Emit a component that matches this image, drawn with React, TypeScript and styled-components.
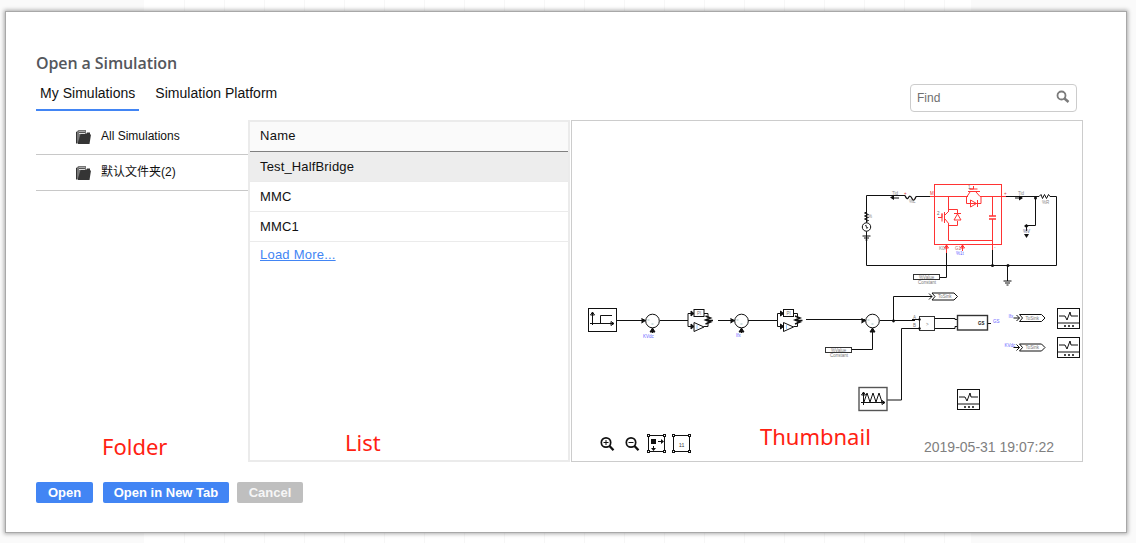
import React from "react";
import styled, { createGlobalStyle } from "styled-components";

const GlobalStyle = createGlobalStyle`
  * { box-sizing: border-box; }
  body { margin: 0; overflow: hidden; }
`;

const Backdrop = styled.div`
  width: 1136px;
  height: 543px;
  padding: 11px 9px 10px 5px;
  overflow: hidden;
  font-family: "Liberation Sans", Arial, sans-serif;
  background:
    linear-gradient(90deg, #fafafa 0 144px, transparent 144px 971px, #fafafa 971px),
    repeating-linear-gradient(90deg, transparent 0 39px, #f7f7f7 39px 40px) 145px 0,
    #fff;
`;

const Dialog = styled.main`
  height: 522px;
  width: 1122px;
  border: 1px solid #a8a8a8;
  background: #fff;
  box-shadow: 0 0 4px 1px rgba(0, 0, 0, 0.32);
  padding: 39px 43px 0 30px;
  display: flex;
  flex-direction: column;
`;

const Title = styled.h1`
  margin: 0;
  height: 25px;
  line-height: 25px;
  font: 600 16px/25px "Open Sans", sans-serif;
  letter-spacing: -0.1px;
  color: #54575c;
`;

const Toolbar = styled.div`
  height: 36px;
  display: flex;
  justify-content: space-between;
  padding-right: 6px;
`;

const Tabs = styled.nav`
  display: flex;
  gap: 12px;
`;

const Tab = styled.a<{ $active?: boolean }>`
  height: 35px;
  padding: 9px 4px 0;
  font-size: 14px;
  line-height: 17px;
  letter-spacing: 0.03px;
  white-space: nowrap;
  color: #111;
  border-bottom: 2px solid ${(p) => (p.$active ? "#4285f4" : "transparent")};
`;

const Search = styled.div`
  width: 167px;
  height: 28px;
  margin-top: 8px;
  border: 1px solid #ccc;
  border-radius: 4px;
  padding: 0 6px;
  display: flex;
  justify-content: space-between;
  font-size: 12px;
  line-height: 26px;
  color: #707070;

  svg { margin-top: 4px; }
`;

const Panels = styled.div`
  display: flex;
  height: 342px;
  margin-top: 8px;
`;

const Column = styled.section`
  width: 212px;
  position: relative;
`;

const FolderRow = styled.div<{ $first?: boolean }>`
  height: ${(p) => (p.$first ? 35 : 36)}px;
  border-bottom: 1px solid #c8c8c8;
  padding: ${(p) => (p.$first ? 8 : 9)}px 0 0 39px;
  display: flex;
  gap: 9px;
  font: 12px/17px "Liberation Sans", "Noto Sans CJK SC", sans-serif;
  color: #111;

  svg { margin-top: 1px; }
`;

const List = styled(Column)`
  width: 322px;
  border: 2px solid #ebebeb;
  font-size: 13px;
  color: #111;
`;

const ListHeader = styled.div`
  height: 30px;
  padding-left: 10px;
  line-height: 28px;
  letter-spacing: 0.3px;
  background: #fafafa;
  border-bottom: 1px solid #808080;
`;

const ListRow = styled.div<{ $selected?: boolean }>`
  height: 30px;
  padding-left: 10px;
  line-height: 30px;
  letter-spacing: 0.15px;
  background: ${(p) => (p.$selected ? "#ededed" : "#fff")};
  border-bottom: 1px solid #ebebeb;
`;

const MoreLink = styled.a`
  display: block;
  padding-left: 10px;
  line-height: 26px;
  letter-spacing: 0.22px;
  color: #4285f4;
  text-decoration: underline;
`;

const Preview = styled(Column)`
  width: 512px;
  margin-left: 1px;
  border: 1px solid #ccc;
`;

const Diagram = styled.svg`
  display: block;
  width: 510px;
  height: 309px;
`;

const PreviewFooter = styled.div`
  height: 31px;
  display: flex;
  justify-content: space-between;
  padding: 3px 28px 0 26px;
  font-size: 14px;
  line-height: 29px;
  color: #808080;
`;

const Note = styled.span<{ $x: number; $y: number }>`
  position: absolute;
  left: ${(p) => p.$x}px;
  top: ${(p) => p.$y}px;
  font: 22px/30px "Noto Sans", sans-serif;
  color: #ff2112;
`;

const Actions = styled.footer`
  display: flex;
  margin-top: 20px;
`;

const Button = styled.button<{ $width: number; $gap?: number; $muted?: boolean }>`
  width: ${(p) => p.$width}px;
  height: 21px;
  margin: 0 0 0 ${(p) => p.$gap ?? 0}px;
  padding: 0;
  border: 0;
  border-radius: 2px;
  background: ${(p) => (p.$muted ? "#bfbfbf" : "#4285f4")};
  color: ${(p) => (p.$muted ? "#f6f6f6" : "#fff")};
  font: bold 13px/21px "Liberation Sans", Arial, sans-serif;
  white-space: nowrap;
`;

const FolderIcon = () => (
  <svg width="17" height="17" viewBox="0 0 17 17">
    <path d="M1 3 3.5 1H11V5H6L4 14H1Z" fill="#777" />
    <path d="M4 2.5H10V5H4Z" fill="#ddd" />
    <path d="M4 3.5H10" stroke="#555" />
    <path d="M1.5 3V14.5" stroke="#333" />
    <path d="M5.5 5H11L12 3.5H15V5.5H16L14.5 15H2.5Z" fill="#353535" />
  </svg>
);

const SearchIcon = () => (
  <svg width="14" height="16" viewBox="0 0 14 16" fill="none" stroke="#7b7b7b">
    <circle cx="5.5" cy="6.5" r="4" strokeWidth="1.8" />
    <path d="M8.5 9.5 12.5 13" strokeWidth="2.5" />
  </svg>
);

const ZoomIcon = ({ x, plus }: { x: number; plus?: boolean }) => (
  <g transform={`translate(${x} 0)`} fill="none" stroke="#111">
    <circle cx="8" cy="9.5" r="4.7" strokeWidth="1.7" />
    <path d="M11.5 13 15.5 17.2" strokeWidth="2.3" />
    <path d={plus ? "M5.5 9.5H10.5M8 7V12" : "M5.5 9.5H10.5"} />
  </g>
);

const FrameIcon = ({ x }: { x: number }) => (
  <g transform={`translate(${x} 0)`} stroke="#111" fill="#fff">
    <rect x="1.5" y="2.5" width="16" height="16" />
    {[[0.5, 1.5], [16.5, 1.5], [0.5, 17.5], [16.5, 17.5]].map(([a, b]) => (
      <rect key={`${a}-${b}`} x={a} y={b} width="2" height="2" />
    ))}
  </g>
);

const ViewTools = () => (
  <svg width="96" height="24" viewBox="0 0 96 24" fontFamily="DejaVu Sans Mono, monospace">
    <ZoomIcon x={0} plus />
    <ZoomIcon x={25} />
    <FrameIcon x={49} />
    <path d="M53 6h5v5h-5ZM60 8h3V6l3 2.5-3 2.5V9h-3ZM55 13h1v2h2l-2.5 3-2.5-3h2Z" fill="#111" />
    <FrameIcon x={74} />
    <text x="83.5" y="14" textAnchor="middle" fontSize="9" fontWeight="bold" letterSpacing="-.5" fill="#222">1:1</text>
  </svg>
);

const Sum = ({ x, y = 321, end }: { x: number; y?: number; end: number }) => (
  <g>
    <circle cx={x} cy={y} r="6.8" fill="#fff" />
    <path d={`M${x} ${y + 7}V${end}`} />
    <path d={`M${x - 2.5} ${y + 11}L${x} ${y + 7}L${x + 2.5} ${y + 11}ZM${x - 11} ${y - 2.5}L${x - 7} ${y - 0.5}L${x - 11} ${y + 2}`} fill="#111" />
    <path d={`M${x - 5} ${y - 1}h2M${x - 1} ${y + 3}h2`} stroke="#7aa" strokeWidth=".7" />
  </g>
);

const Controller = ({ x }: { x: number }) => (
  <g transform={`translate(${x} 0)`}>
    <path d="M0 320.5H5V313.5H10M5 320.5V326.5H10" />
    <path d="M8 311 11 313.5 8 316ZM8 324 11 326.5 8 329Z" fill="#111" />
    <rect x="11" y="309.5" width="10" height="7" fill="#fff" />
    <path d="M11 322.5V331.5L21 327Z" fill="#fff" />
    <path d="M21 313.5H25V318M21 326.5H25V322" />
    <path d="m22.5 316 5 2-5 2 5 2-5 2M25 320.5h5" strokeWidth="1.5" />
    <text x="14" y="315" fill="#777">PI</text>
    <path d="M14 325v4" stroke="#9cf" />
  </g>
);

const Scope = ({ x, y }: { x: number; y: number }) => (
  <g transform={`translate(${x} ${y})`}>
    <rect x=".5" y=".5" width="22" height="20" fill="#fff" />
    <path d="M1 15H22M2 8H8L10 12 13 4 14 8H21" />
    <path d="M7 18h2m2 0h2m2 0h2" strokeWidth="1.3" />
  </g>
);

const Link = ({ x, y }: { x: number; y: number }) => (
  <g transform={`translate(${x} ${y})`}>
    <path d="M-6 0H0M-3 -3L0 0L-3 3" />
    <path d="M0 -3.5H22L25.5 0L22 3.5H0L3 0Z" fill="#fff" />
    <text x="6" y="1.6" fill="#777">ToSink</text>
  </g>
);

const Constant = ({ x, y }: { x: number; y: number }) => (
  <g transform={`translate(${x} ${y})`}>
    <rect x=".5" y=".5" width="26" height="5" fill="#fff" stroke="#333" />
    <text x="6" y="4.6" fill="#777">%Value</text>
    <text x="5" y="9.5" fill="#777">Constant</text>
  </g>
);

const Ground = ({ x, y }: { x: number; y: number }) => (
  <path d={`M${x - 4} ${y}h8m-6.5 2h5m-3.5 2h2`} />
);

const Circuit = () => (
  <Diagram viewBox="572 121 510 309" fill="none" stroke="#111" strokeWidth="1">
    <style>{"text{stroke:none;font:4.5px 'Liberation Sans',sans-serif}"}</style>

    <path d="M866.5 226V195.5H905M916 196.5H934M866.5 226V265.5H1056.5V196.5H1050M1001 196.5H1039M992.5 245V265M1007.5 265V281M1035.5 197V225.5H1026.5V231M946.5 253V277.5H940" />
    <path d="m866.5 212-2 1 4 1.5-4 1.5 4 1.5-4 1.5 4 1.5-2 1" />
    <circle cx="866.5" cy="227" r="4.2" fill="#fff" />
    <path d="M865 226q1.5-2 1.5 1t1.5 0" strokeWidth=".8" />
    <Ground x={866.5} y={236} />
    <Ground x={1007.5} y={281} />
    <path d="M905 195.5q2 5 3.5 2t3.5 1 4-2" strokeWidth="1.3" />
    <path d="m890 197.5 4-2.5v5ZM1023 198l-4-2.5v5Z" fill="#111" stroke="none" />
    <path d="M892 198h7M1015 198h7" />
    <path d="m1039 196.5 2-2 1.5 4 2-4 2 4 2-4 1.5 2" />
    <path d="m1024 226 2.5-2 2 2-2 2ZM1024 234h5l-2.5 4Z" fill="#111" stroke="none" />
    <g fill="#111" stroke="none">
      <circle cx="992.5" cy="265.5" r="1.5" />
      <circle cx="1008" cy="265.5" r="1.5" />
      <circle cx="1035.5" cy="198" r="1.5" />
    </g>
    <g fill="#888">
      <text x="892" y="194.5">Tid</text><text x="909" y="202.5">%L</text>
      <text x="930" y="194.5" fill="#d33">M</text><text x="868" y="218">%</text>
      <text x="1018" y="194.5">Tid</text><text x="1042" y="203.5">%R</text>
      <text x="1023" y="233" fill="#568">%V</text>
      <text x="904" y="195" fill="#d33">+</text><text x="1004" y="195" fill="#d33">+</text>
      <text x="939" y="249.5">K0i</text><text x="955" y="249.5" fill="#b66">G1</text>
      <text x="956" y="254.5" fill="#66f">%1t</text>
      <text x="994" y="249">-</text>
    </g>

    <g stroke="#f33">
      <rect x="934.5" y="184.5" width="67" height="60" />
      <path d="M930 196.5H968M980 196.5H1006M948.5 197V211M948.5 224V240.5H992.5M992.5 197V216M992.5 219V250" />
      <path d="M989 216h7m-7 3h7" strokeWidth="1.4" />
      <path d="M938 217.5h4v-4v8M944.5 212v11M945 215l4-4M945 219l4 5M948.5 209.5H957.5V213M948.5 225.5H957.5V221M954 213.5h7" />
      <path d="M954 220h7l-3.5-6Z" />
      <path d="M973.5 186v3h-4h8M968 191.5h12M970 192l-3 4.5M976 192l4 4.5M966.5 197V203.5H981V197M977.5 200v7" />
      <path d="M970.5 200v7l6-3.5Z" />
      <path d="M946.5 253v-8l-2 3h4l-2-3M962.5 251v-6l-2 3h4l-2-3" />
      <text x="937" y="215" fill="#666">2</text><text x="968" y="189" fill="#777">1</text>
    </g>
    <Constant x={913} y={274} />

    <g>
      <rect x="588.5" y="308.5" width="28" height="23" fill="#fff" />
      <path d="M592.5 325V312l-2 3h4l-2-3M590 323.5H614l-3-2v4l3-2M600.5 323V315.5H612" />
      <path d="M617 320.5H645M660 320.5H688M718 320.5H734M748 320.5H777M806 319.5H865M880 320.5H915M893.5 320V296.5H928M887 400H901.5V328.5H915M852 349.5H872.5V331" />
      <circle cx="893.5" cy="321" r="1.4" fill="#111" stroke="none" />
      <Sum x={652.5} end={333} />
      <Sum x={741.5} end={333} />
      <Sum x={872.5} end={349} />
      <Controller x={683} />
      <Controller x={772.5} />
      <text x="643" y="338" fill="#66f">KVdc</text>
      <text x="736" y="337" fill="#66f">Ifx</text>
      <Constant x={825} y={347} />
    </g>

    <rect x="919.5" y="316.5" width="15" height="14" fill="#fff" stroke="#333" />
    <path d="M912 319.5h8M914 328.5h6M935 318.5H955V319.5H957M935 328.5H955V326.5H957M988 323.5h3" />
    <rect x="957.5" y="315.5" width="30" height="14.5" fill="#fff" stroke="#333" strokeWidth="1.4" />
    <circle cx="919.5" cy="319.5" r="1.2" fill="#111" stroke="none" />
    <circle cx="919.5" cy="328.5" r="1.2" fill="#111" stroke="none" />
    <text x="926" y="326" fill="#777">&gt;</text>
    <text x="913" y="319" fill="#777">A</text>
    <text x="913" y="327" fill="#777">B</text>
    <text x="978" y="324.5" fill="#111" fontWeight="bold" style={{ fontWeight: "bold" }}>GS</text>
    <text x="993" y="322.5" fill="#66f">GS</text>

    <Link x={932} y={296.5} />
    <Link x={1019.5} y={318} />
    <Link x={1019.5} y={347.5} />
    <text x="1008.5" y="317.5" fill="#66f">Ifx</text>
    <text x="1004.5" y="346.5" fill="#66f">KVdc</text>
    <Scope x={1057} y={308} />
    <Scope x={1057} y={337} />
    <Scope x={957} y={389} />

    <rect x="859" y="387.5" width="28" height="23" fill="#fff" stroke="#555" strokeWidth="1.4" />
    <path d="M863.5 405V392l-2 3h4l-2-3M861 402.5H885l-3-2v4l3-2M864 402l3-9 3 9 3-9 3 9 3-9 3 9" />
  </Diagram>
);

export default function App() {
  return (
    <>
      <GlobalStyle />
      <Backdrop>
        <Dialog>
          <Title>Open a Simulation</Title>
          <Toolbar>
            <Tabs>
              <Tab $active>My Simulations</Tab>
              <Tab>Simulation Platform</Tab>
            </Tabs>
            <Search><span>Find</span><SearchIcon /></Search>
          </Toolbar>
          <Panels>
            <Column>
              <FolderRow $first><FolderIcon /><span>All Simulations</span></FolderRow>
              <FolderRow><FolderIcon /><span>默认文件夹(2)</span></FolderRow>
              <Note $x={66} $y={311}>Folder</Note>
            </Column>
            <List>
              <ListHeader>Name</ListHeader>
              <ListRow $selected>Test_HalfBridge</ListRow>
              <ListRow>MMC</ListRow>
              <ListRow>MMC1</ListRow>
              <MoreLink>Load More...</MoreLink>
              <Note $x={95} $y={305}>List</Note>
            </List>
            <Preview>
              <Circuit />
              <PreviewFooter><ViewTools /><span>2019-05-31 19:07:22</span></PreviewFooter>
              <Note $x={188} $y={300}>Thumbnail</Note>
            </Preview>
          </Panels>
          <Actions>
            <Button $width={57}>Open</Button>
            <Button $width={126} $gap={10}>Open in New Tab</Button>
            <Button $width={66} $gap={8} $muted>Cancel</Button>
          </Actions>
        </Dialog>
      </Backdrop>
    </>
  );
}
